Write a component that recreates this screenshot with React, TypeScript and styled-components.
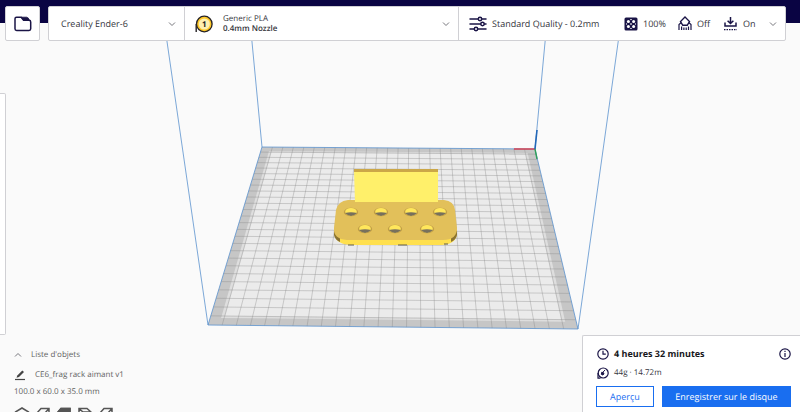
import React from "react";
import styled, { createGlobalStyle } from "styled-components";

const navy = "#0a0443";
const ink = "#1a1446";
const line = "#d0d0d4";
const blue = "#196ef0";

const GlobalStyle = createGlobalStyle`
  *, *::before, *::after { box-sizing: border-box; }
  body { margin: 0; background: #fafafa; color: #35353c; font-family: "Open Sans", "Noto Sans", sans-serif; font-size: 9px; line-height: 12px; text-rendering: geometricPrecision; }
  button { font: inherit; color: inherit; cursor: pointer; text-rendering: inherit; }
  h2, p { margin: 0; font: inherit; }
  svg { display: block; flex: none; }
`;

const Page = styled.div`
  position: relative;
  display: flex;
  flex-direction: column;
  height: 100vh;
  overflow: hidden;
`;

const SceneSvg = styled.svg`
  position: absolute;
  inset: 0;
  width: 100%;
  height: 100%;
`;

const Header = styled.header`
  position: relative;
  display: flex;
  gap: 8px;
  padding: 6px 14px 0 5px;
  background: linear-gradient(${navy} 23px, transparent 23px);
`;

const OpenButton = styled.button`
  display: grid;
  place-items: center;
  width: 35px;
  height: 35px;
  padding: 0;
  background: #fff;
  border: 1px solid ${line};
  border-radius: 2px;
`;

const StageBar = styled.div`
  display: grid;
  grid-template-columns: minmax(0, 135fr) minmax(0, 274fr) minmax(0, 327fr);
  flex: 1;
  height: 35px;
  background: #fff;
  border: 1px solid ${line};
  border-radius: 2px;
`;

const StageButton = styled.button<{ $indent: number }>`
  display: flex;
  align-items: center;
  padding: 0 8px 0 ${(p) => p.$indent}px;
  background: none;
  border: 0;
  text-align: left;
  white-space: nowrap;
  & + & { border-left: 1px solid ${line}; }
  & > svg:last-child { margin-left: auto; }
`;

const Material = styled.span`
  display: flex;
  flex-direction: column;
  margin-left: 10px;
  font-size: 8px;
  line-height: 10px;
`;

const Nozzle = styled.span`
  font-weight: 600;
`;

const Profile = styled.span`
  flex: 1;
  margin-left: 5px;
`;

const Setting = styled.span<{ $width: number }>`
  display: flex;
  align-items: center;
  gap: 5px;
  width: ${(p) => p.$width}px;
`;

const Middle = styled.main`
  position: relative;
  display: flex;
  flex: 1;
  padding-top: 52px;
`;

const ToolPanel = styled.aside`
  width: 6px;
  background: #fff;
  border: 1px solid ${line};
  border-left: 0;
  border-radius: 0 2px 2px 0;
`;

const Footer = styled.footer`
  position: relative;
  display: flex;
  justify-content: space-between;
  height: 77px;
`;

const ObjectList = styled.section`
  display: flex;
  flex-direction: column;
  align-items: flex-start;
  padding: 14px 0 0 14px;
  color: #626262;
  font-size: 8px;
`;

const ListToggle = styled.button`
  display: flex;
  align-items: center;
  gap: 9px;
  padding: 0;
  background: none;
  border: 0;
`;

const ObjectName = styled(ListToggle)`
  margin-top: 8px;
`;

const Dimensions = styled.p`
  margin-top: 5px;
`;

const ViewTools = styled.div`
  display: flex;
  gap: 5px;
  margin-top: 9px;
`;

const ViewButton = styled.button`
  padding: 0;
  background: none;
  border: 0;
`;

const JobCard = styled.section`
  display: flex;
  flex-direction: column;
  width: 218px;
  padding: 12px 9px 0 13px;
  background: #fff;
  border: 1px solid ${line};
  border-width: 1px 0 0 1px;
  border-radius: 2px 0 0 0;
`;

const JobRow = styled.div`
  display: flex;
  align-items: center;
  gap: 5px;
  padding-left: 1px;
  & + & { margin-top: 7px; }
`;

const Duration = styled.h2`
  flex: 1;
  color: #18181c;
  font-size: 9px;
  font-weight: 700;
`;

const Usage = styled.p`
  font-size: 8px;
`;

const InfoButton = styled.button`
  padding: 0;
  background: none;
  border: 0;
`;

const Actions = styled.div`
  display: flex;
  gap: 8px;
  margin-top: 7px;
`;

const Action = styled.button<{ $primary?: boolean }>`
  flex: ${(p) => (p.$primary ? "1" : "0 0 58px")};
  height: 21px;
  padding: 0;
  background: ${(p) => (p.$primary ? blue : "#fff")};
  color: ${(p) => (p.$primary ? "#fff" : blue)};
  border: 1px solid ${blue};
  font-size: 9px;
  line-height: 19px;
`;

const Chevron = ({ up = false }: { up?: boolean }) => (
  <svg width="8" height="8" viewBox="0 0 8 8" fill="none" stroke="#77777d" aria-hidden="true">
    <path d={up ? "M1 5.5 4 2.5 7 5.5" : "M1 2.5 4 5.5 7 2.5"} />
  </svg>
);

const FolderIcon = () => (
  <svg width="18" height="16" viewBox="0 0 18 16" fill="none" stroke={ink} strokeWidth="1.5" strokeLinejoin="round" aria-hidden="true">
    <path d="M1 12.8V2.7Q1 1.2 2.5 1.2H7.2L9.6 4.3H15Q16.7 4.3 16.7 6V12.8Q16.7 14.4 15 14.4H2.6Q1 14.4 1 12.8Z" />
    <path d="M7.2 1.2H12.6Q14.6 1.4 15.4 4.3H9.6Z" fill={ink} strokeWidth="0.8" />
  </svg>
);

const SpoolIcon = () => (
  <svg width="18" height="18" viewBox="0 0 18 18" aria-hidden="true">
    <path d="M1.2 9V17" stroke="#252225" strokeWidth="1.4" />
    <circle cx="9.3" cy="9" r="7.8" fill="#ffc928" stroke="#252225" strokeWidth="1.3" />
    <circle cx="9.3" cy="9" r="5.6" fill="#fff0b0" />
    <text x="9.3" y="11.8" textAnchor="middle" fontSize="8" fontWeight="700" fill="#222">1</text>
  </svg>
);

const SlidersIcon = () => (
  <svg width="18" height="16" viewBox="0 0 18 16" fill="none" stroke={ink} strokeWidth="1.5" strokeLinecap="round" aria-hidden="true">
    <path d="M1 3H9M13 3H17M1 8H11.5M15.5 8H17M1 13H5M9 13H17" />
    <circle cx="11" cy="3" r="1.7" />
    <circle cx="13.5" cy="8" r="1.7" />
    <circle cx="7" cy="13" r="1.7" />
  </svg>
);

const InfillIcon = () => (
  <svg width="14" height="14" viewBox="0 0 14 14" aria-hidden="true">
    <rect x="0.5" y="0.5" width="13" height="13" rx="1.5" fill={ink} />
    <g fill="#fff">
      <circle cx="4.4" cy="4.4" r="1.5" />
      <circle cx="9.6" cy="4.4" r="1.5" />
      <circle cx="4.4" cy="9.6" r="1.5" />
      <circle cx="9.6" cy="9.6" r="1.5" />
      <path d="M7 5.9 8.1 7 7 8.1 5.9 7ZM5.9 2H8.1L7 3.2ZM5.9 12H8.1L7 10.8ZM2 5.9V8.1L3.2 7ZM12 5.9V8.1L10.8 7Z" />
    </g>
  </svg>
);

const SupportIcon = () => (
  <svg width="14" height="15" viewBox="0 0 14 15" fill="none" stroke={ink} strokeWidth="1.4" aria-hidden="true">
    <path d="M7 1 11.5 5.5 9.2 9.3H4.8L2.5 5.5Z" />
    <path d="M1 14V8.5L3 6.8M13 14V8.5L11 6.8M3.6 14V10.5M5.9 14V11.5M8.2 14V11.5M10.5 14V10.5" strokeWidth="1.2" />
  </svg>
);

const AdhesionIcon = () => (
  <svg width="15" height="15" viewBox="0 0 15 15" fill="none" stroke={ink} strokeWidth="1.5" aria-hidden="true">
    <path d="M7.5 1V7M4.6 4.7 7.5 7.5 10.4 4.7M2 6.5V10H13V6.5" />
    <path d="M1 13.6H14" strokeDasharray="1.5 1" strokeWidth="1.3" />
  </svg>
);

const PencilIcon = () => (
  <svg width="12" height="12" viewBox="0 0 12 12" aria-hidden="true">
    <path d="M2.5 8.8 3.3 6.4 8.3 1.4 10 3.1 5 8.1Z" fill="#444" />
    <path d="M1 10.5H11" stroke="#444" strokeWidth="1.2" />
  </svg>
);

const ClockIcon = () => (
  <svg width="12" height="12" viewBox="0 0 12 12" fill="none" stroke={ink} strokeWidth="1.2" aria-hidden="true">
    <circle cx="6" cy="6" r="5.2" />
    <path d="M6 2.8V6.2H8.8" />
  </svg>
);

const UsageIcon = () => (
  <svg width="12" height="12" viewBox="0 0 12 12" fill="none" stroke={ink} strokeWidth="1.2" aria-hidden="true">
    <circle cx="6.2" cy="6" r="5" />
    <path d="M1 6V11.2H3.5" />
    <path d="M8 3 5 6.2M4.7 5.3Q7 5 7 7Q5.6 8.7 4.3 7.3Z" fill={ink} strokeWidth="1" />
  </svg>
);

const InfoIcon = () => (
  <svg width="12" height="12" viewBox="0 0 12 12" fill="none" stroke={ink} strokeWidth="1.2" aria-hidden="true">
    <circle cx="6" cy="6" r="5.2" />
    <path d="M6 5V9M6 2.8V4" />
  </svg>
);

const viewIcons = [
  { label: "Vue 3D", path: "M1.5 5 8 1 14.5 5V11L8 15 1.5 11Z", solid: "" },
  { label: "Vue avant", path: "M2 14V6L6 1.5H14V9L10 14ZM2 6H10L14 1.5M10 6V14", solid: "" },
  { label: "Vue dessus", path: "M2 14V5L5 1.5H14V10L11 14Z", solid: "M2 5 5 1.5H14V5Z" },
  { label: "Vue gauche", path: "M2 10V1.5H10L14 5V14H6ZM2 1.5 6 5H14M6 5V14", solid: "" },
  { label: "Vue droite", path: "M2 14V6L6 1.5H14V9L10 14ZM2 6H10L14 1.5M10 6V14", solid: "" },
];

type Point = [number, number];

const bed: Point[] = [[262, 147], [535, 149], [578, 329], [208, 325]];
const cells = 26;

// Projects a point of the unit square onto the four corners of the bed.
const project = (() => {
  const [[x0, y0], [x1, y1], [x2, y2], [x3, y3]] = bed;
  const dx1 = x1 - x2, dx2 = x3 - x2, sx = x0 - x1 + x2 - x3;
  const dy1 = y1 - y2, dy2 = y3 - y2, sy = y0 - y1 + y2 - y3;
  const det = dx1 * dy2 - dx2 * dy1;
  const g = (sx * dy2 - dx2 * sy) / det;
  const h = (dx1 * sy - sx * dy1) / det;
  return (u: number, v: number): Point => {
    const w = g * u + h * v + 1;
    return [
      ((x1 - x0 + g * x1) * u + (x3 - x0 + h * x3) * v + x0) / w,
      ((y1 - y0 + g * y1) * u + (y3 - y0 + h * y3) * v + y0) / w,
    ];
  };
})();

const segment = (a: Point, b: Point) => `M${a.join(" ")}L${b.join(" ")}`;

const inset = (d: number) =>
  [project(d, d), project(1 - d, d), project(1 - d, 1 - d), project(d, 1 - d)].map((p) => p.join(",")).join(" ");

const gridPath = Array.from({ length: cells - 1 }, (_, i) => (i + 1) / cells)
  .map((t) => segment(project(t, 0), project(t, 1)) + segment(project(0, t), project(1, t)))
  .join("");

const holes: Point[] = [[351, 212], [381, 212], [411, 212], [440, 212], [365, 229], [395, 229], [427, 229]];

const Scene = () => (
  <SceneSvg viewBox="0 0 800 412" preserveAspectRatio="xMidYMid slice" role="img" aria-label="Plateau d'impression">
    <polygon points={inset(0)} fill="#c6c6c6" />
    <polygon points={inset(0.03)} fill="#dedede" />
    <polygon points={inset(0.04)} fill="#ebebeb" />
    <path d={gridPath} stroke="#858585" strokeWidth="0.7" opacity="0.5" fill="none" />
    <g fill="none" stroke="#5a92ce" strokeWidth="0.8">
      <polygon points={inset(0)} />
      <path d="M208 325 161 0M262 147 248 0M535 149 549 0M578 329 624 0" />
    </g>
    <path d="M514 149H535" stroke="#d83a4a" strokeWidth="1.4" />
    <path d="M535 149 537 159" stroke="#2f9f5a" strokeWidth="1.4" />
    <path d="M535 149 537 130" stroke="#2368b8" strokeWidth="1.6" />
    <path d="M334 228V234Q336 244 350 245H442Q456 244 457 234V228Z" fill="#ffe04e" />
    <path d="M334 230V235Q335 240 340 242V238ZM457 230V235Q456 240 451 242V238Z" fill="#8b7330" />
    <path d="M348 245H354M398 245H407M444 244H448" stroke="#5f5a48" strokeWidth="1" />
    <path d="M348 200H444Q454 201 455 210L457 228Q457 240 443 240H347Q333 239 334 228L336 210Q338 201 348 200Z" fill="#e2c05a" />
    <path d="M354 171H438V202H355Z" fill="#fff06a" />
    <path d="M354 169H438V172H354Z" fill="#cba748" />
    {holes.map(([x, y]) => (
      <g key={`${x}-${y}`}>
        <ellipse cx={x} cy={y} rx="7.2" ry="4.3" fill="#c29f47" />
        <ellipse cx={x} cy={y - 0.2} rx="5.8" ry="3.9" fill="#ffe75c" />
        <path d={`M${x - 6} ${y + 1}Q${x} ${y - 0.5} ${x + 6} ${y + 1}Q${x + 3} ${y + 4} ${x} ${y + 4}Q${x - 3} ${y + 4} ${x - 6} ${y + 1}Z`} fill="#77705c" />
      </g>
    ))}
  </SceneSvg>
);

export default function App() {
  return (
    <Page>
      <GlobalStyle />
      <Scene />
      <Header>
        <OpenButton aria-label="Ouvrir un fichier"><FolderIcon /></OpenButton>
        <StageBar>
          <StageButton $indent={12} aria-haspopup="menu">
            Creality Ender-6
            <Chevron />
          </StageButton>
          <StageButton $indent={10} aria-haspopup="menu">
            <SpoolIcon />
            <Material>
              <span>Generic PLA</span>
              <Nozzle>0.4mm Nozzle</Nozzle>
            </Material>
            <Chevron />
          </StageButton>
          <StageButton $indent={10} aria-haspopup="menu">
            <SlidersIcon />
            <Profile>Standard Quality - 0.2mm</Profile>
            <Setting $width={54}><InfillIcon />100%</Setting>
            <Setting $width={45}><SupportIcon />Off</Setting>
            <Setting $width={46}><AdhesionIcon />On</Setting>
            <Chevron />
          </StageButton>
        </StageBar>
      </Header>
      <Middle>
        <ToolPanel aria-label="Outils" />
      </Middle>
      <Footer>
        <ObjectList>
          <ListToggle aria-expanded="false"><Chevron up />Liste d'objets</ListToggle>
          <ObjectName><PencilIcon />CE6_frag rack aimant v1</ObjectName>
          <Dimensions>100.0 x 60.0 x 35.0 mm</Dimensions>
          <ViewTools>
            {viewIcons.map((icon) => (
              <ViewButton key={icon.label} aria-label={icon.label}>
                <svg width="16" height="16" viewBox="0 0 16 16" fill="none" stroke="#555" strokeWidth="1.5" aria-hidden="true">
                  <path d={icon.path} />
                  {icon.solid && <path d={icon.solid} fill="#555" />}
                </svg>
              </ViewButton>
            ))}
          </ViewTools>
        </ObjectList>
        <JobCard>
          <JobRow>
            <ClockIcon />
            <Duration>4 heures 32 minutes</Duration>
            <InfoButton aria-label="Informations"><InfoIcon /></InfoButton>
          </JobRow>
          <JobRow>
            <UsageIcon />
            <Usage>44g · 14.72m</Usage>
          </JobRow>
          <Actions>
            <Action>Aperçu</Action>
            <Action $primary>Enregistrer sur le disque</Action>
          </Actions>
        </JobCard>
      </Footer>
    </Page>
  );
}
